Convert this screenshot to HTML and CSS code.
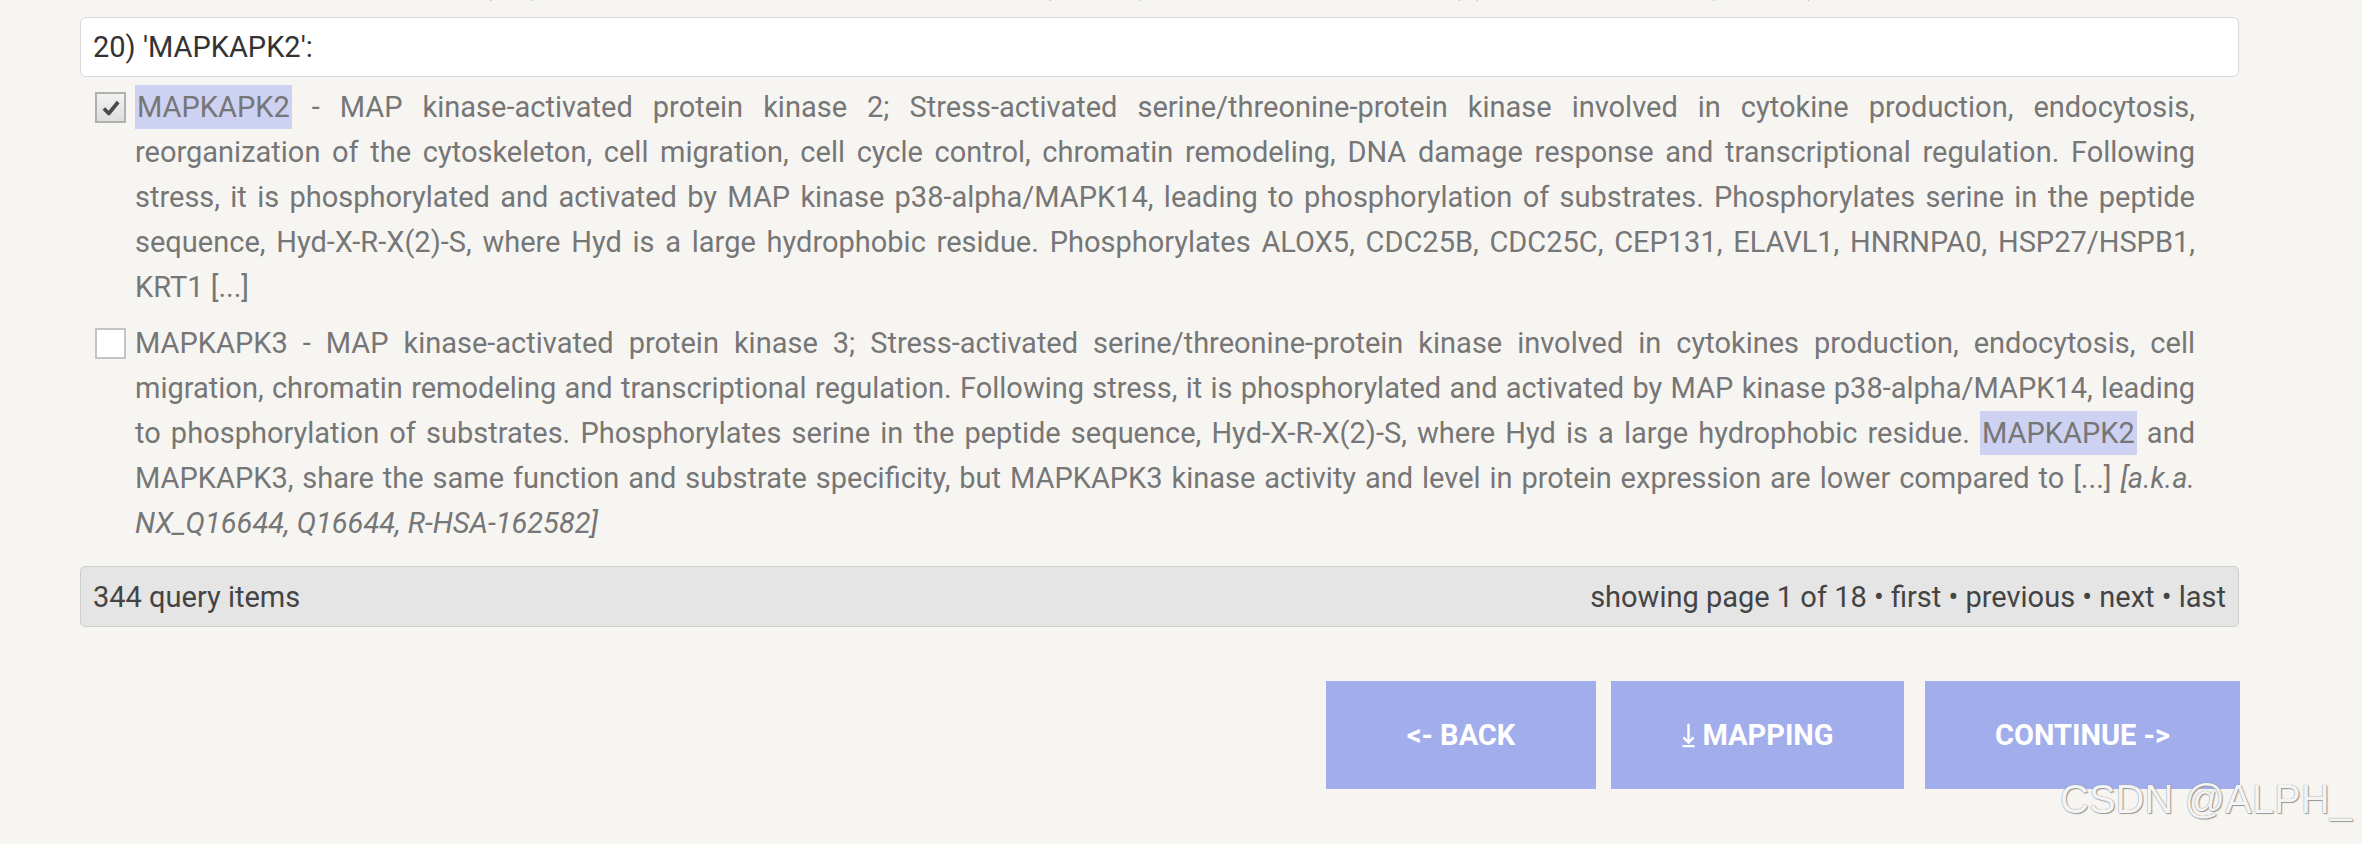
FILE: index.html
```html
<!DOCTYPE html>
<html lang="en">
<head>
<meta charset="utf-8">
<title>Mapping</title>
<link rel="stylesheet" href="styles.css">
</head>
<body>
<div class="wrap">
  <p class="intro">Please select the proper entry(ies) for your query gene below, by tagging (ticking) the corresponding row(s); any query gene (protein) left empty will be skipped.</p>

  <div class="query">20) 'MAPKAPK2':</div>

  <div class="item">
    <span class="cb checked"><svg viewBox="0 0 20 20" width="22" height="22"><path d="M3.5 10.5 L8 15 L16.5 4.5" fill="none" stroke="#4a4a4a" stroke-width="3.4" stroke-linejoin="round"/></svg></span>
    <p class="desc"><span class="hl">MAPKAPK2</span> - MAP kinase-activated protein kinase 2; Stress-activated serine/threonine-protein kinase involved in cytokine production, endocytosis, reorganization of the cytoskeleton, cell migration, cell cycle control, chromatin remodeling, DNA damage response and transcriptional regulation. Following stress, it is phosphorylated and activated by MAP kinase p38-alpha/MAPK14, leading to phosphorylation of substrates. Phosphorylates serine in the peptide sequence, Hyd-X-R-X(2)-S, where Hyd is a large hydrophobic residue. Phosphorylates ALOX5, CDC25B, CDC25C, CEP131, ELAVL1, HNRNPA0, HSP27/HSPB1, KRT1 [...]</p>
  </div>

  <div class="item">
    <span class="cb"></span>
    <p class="desc">MAPKAPK3 - MAP kinase-activated protein kinase 3; Stress-activated serine/threonine-protein kinase involved in cytokines production, endocytosis, cell migration, chromatin remodeling and transcriptional regulation. Following stress, it is phosphorylated and activated by MAP kinase p38-alpha/MAPK14, leading to phosphorylation of substrates. Phosphorylates serine in the peptide sequence, Hyd-X-R-X(2)-S, where Hyd is a large hydrophobic residue. <span class="hl">MAPKAPK2</span> and MAPKAPK3, share the same function and substrate specificity, but MAPKAPK3 kinase activity and level in protein expression are lower compared to [...] <i class="aka">[a.k.a. NX_Q16644, Q16644, R-HSA-162582]</i></p>
  </div>

  <div class="status">
    <span>344 query items</span>
    <span>showing page 1 of 18 • first • previous • next • last</span>
  </div>

  <div class="buttons">
    <a class="btn btn-back">&lt;- BACK</a>
    <a class="btn btn-map"><svg class="dl" viewBox="0 0 16 28" width="15" height="26"><path d="M8 2 V22 M2.5 16.5 L8 22 L13.5 16.5 M1.5 26 H14.5" fill="none" stroke="#fff" stroke-width="2.6"/></svg>MAPPING</a>
    <a class="btn btn-cont">CONTINUE -&gt;</a>
  </div>
</div>
<div class="watermark">CSDN @ALPH_</div>
</body>
</html>
```
FILE: styles.css
```css
html, body {
  margin: 0;
  padding: 0;
}
body {
  background: #f6f5f2;
  font-family: Roboto, "Liberation Sans", Arial, sans-serif;
  font-size: 29px;
  color: #767676;
  width: 2362px;
  height: 844px;
  overflow: hidden;
  position: relative;
}
.wrap {
  margin-left: 80px;
  width: 2159px;
}
.intro {
  margin: -38px 0 0 0;
  padding: 0 44px 0 13px;
  line-height: 45px;
  height: 45px;
  overflow: hidden;
  white-space: nowrap;
  font-size: 29.5px;
  color: #777;
}
.query {
  margin-top: 10px;
  height: 58px;
  line-height: 58px;
  background: #fff;
  border: 1px solid #d9d9d9;
  border-radius: 6px;
  padding: 0 12px;
  color: #333;
}
.item {
  display: flex;
  align-items: flex-start;
  padding: 0 44px 0 15px;
  margin-top: 8px;
}
.item + .item {
  margin-top: 11px;
}
.cb {
  flex: none;
  box-sizing: border-box;
  width: 31px;
  height: 31px;
  margin-top: 7px;
  margin-right: 9px;
  border: 2px solid #c4c4c4;
  background: #fff;
  display: flex;
  align-items: center;
  justify-content: center;
}
.cb.checked {
  border-color: #b0b0b0;
  background: linear-gradient(#f2f2f2, #dedede);
}
.desc {
  margin: 0;
  flex: 1;
  font-size: 29px;
  line-height: 45px;
  text-align: justify;
  color: #767676;
}
.hl {
  background: #cdd1f2;
  padding: 5px 2px;
}
.aka {
  font-style: italic;
}
.status {
  margin-top: 20px;
  height: 59px;
  background: #e5e5e5;
  border: 1px solid #cecece;
  border-radius: 5px;
  display: flex;
  align-items: center;
  justify-content: space-between;
  padding: 0 12px;
  color: #444;
}
.buttons {
  margin-top: 54px;
  display: flex;
  justify-content: flex-end;
  margin-right: -1px;
}
.btn {
  height: 108px;
  display: flex;
  align-items: center;
  justify-content: center;
  gap: 6px;
  background: #a2adec;
  color: #fff;
  font-weight: 700;
  font-size: 29px;
  text-decoration: none;
}
.dl {
  display: block;
}
.btn-back { width: 270px; margin-right: 15px; }
.btn-map { width: 293px; margin-right: 21px; }
.btn-cont { width: 315px; }
.watermark {
  position: absolute;
  left: 2060px;
  top: 777px;
  font-family: "Liberation Sans", Arial, sans-serif;
  font-size: 40px;
  color: #f4f4f4;
  text-shadow: 0 0 1px #777, 1px 1px 1px #999;
  white-space: nowrap;
}
```
